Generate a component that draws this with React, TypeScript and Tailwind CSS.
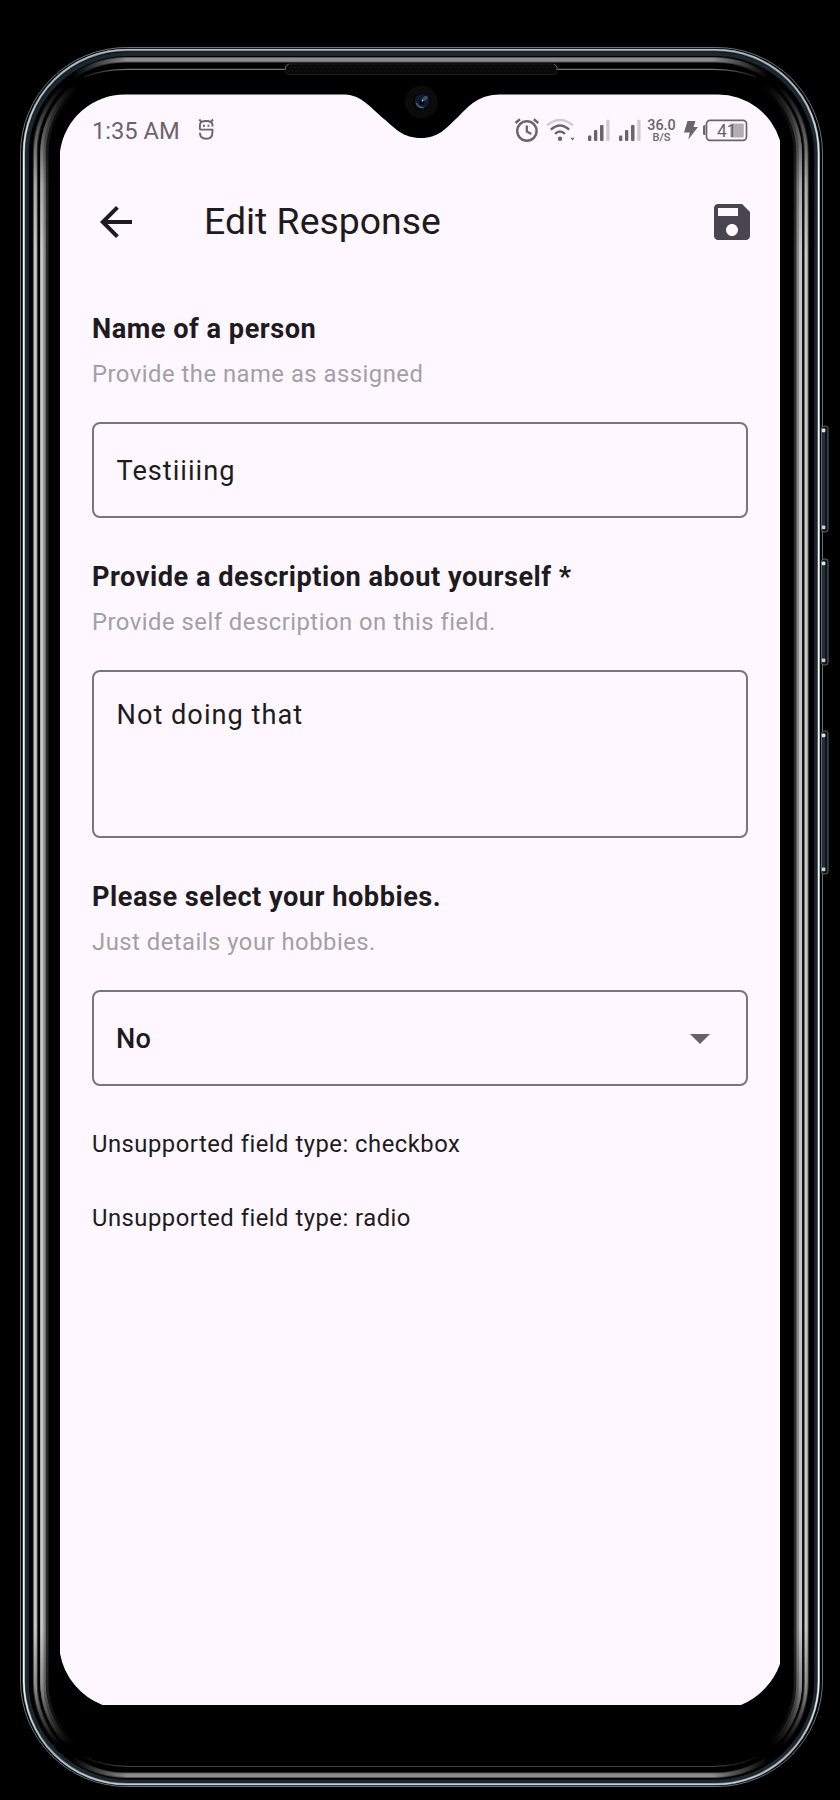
import React from "react";

function rail(l: number, t: number, r: number, b: number, q: number) {
  return `M${l + q} ${t}H${r - q}A${q} ${q} 0 0 1 ${r} ${t + q}V${b - q}A${q} ${q} 0 0 1 ${r - q} ${b}H${l + q}A${q} ${q} 0 0 1 ${l} ${b - q}V${t + q}A${q} ${q} 0 0 1 ${l + q} ${t}Z`;
}

const sideKeys = [
  { y: 426, h: 106 },
  { y: 559, h: 106 },
  { y: 731, h: 143 },
];

function PhoneFrame() {
  return (
    <svg className="absolute inset-0" width="840" height="1800" viewBox="0 0 840 1800" fill="none" aria-hidden="true">
      <defs>
        <linearGradient id="side" gradientUnits="userSpaceOnUse" x1="0" y1="85" x2="0" y2="1745">
          <stop offset="0" stopColor="#fff" stopOpacity="0" />
          <stop offset="0.025" stopColor="#fff" stopOpacity="0.4" />
          <stop offset="0.06" stopColor="#fff" stopOpacity="0.85" />
          <stop offset="0.1" stopColor="#fff" stopOpacity="1" />
          <stop offset="0.93" stopColor="#fff" stopOpacity="1" />
          <stop offset="0.965" stopColor="#fff" stopOpacity="0.7" />
          <stop offset="1" stopColor="#fff" stopOpacity="0" />
        </linearGradient>
        <linearGradient id="flat" gradientUnits="userSpaceOnUse" x1="72" y1="0" x2="768" y2="0">
          <stop offset="0" stopColor="#fff" stopOpacity="0" />
          <stop offset="0.08" stopColor="#fff" stopOpacity="1" />
          <stop offset="0.92" stopColor="#fff" stopOpacity="1" />
          <stop offset="1" stopColor="#fff" stopOpacity="0" />
        </linearGradient>
        <linearGradient id="edge" gradientUnits="userSpaceOnUse" x1="0" y1="48" x2="0" y2="1786">
          <stop offset="0" stopColor="#aebbc2" />
          <stop offset="0.03" stopColor="#b4c0c7" />
          <stop offset="0.07" stopColor="#f4fafb" />
          <stop offset="0.94" stopColor="#f4fafb" />
          <stop offset="0.98" stopColor="#a8b5bc" />
          <stop offset="1" stopColor="#c3d0d8" />
        </linearGradient>
        <mask id="sideMask" maskUnits="userSpaceOnUse" x="0" y="0" width="840" height="1800">
          <path d="M0 0L76 84V1750L0 1800ZM840 0L764 84V1750L840 1800Z" fill="url(#side)" />
        </mask>
        <mask id="flatMask" maskUnits="userSpaceOnUse" x="0" y="0" width="840" height="1800">
          <path d="M0 0L84 110H756L840 0ZM0 1800L66 1740H774L840 1800Z" fill="url(#flat)" />
        </mask>
      </defs>
      <path d={rail(20.5, 47.5, 822.5, 1786.5, 106)} stroke="#6b7175" />
      <path d={rail(26.8, 54, 816.2, 1781.5, 100)} stroke="#1b262d" strokeWidth="4" />
      <path d={rail(23.8, 50, 818.7, 1784.2, 103)} stroke="#5d6a72" strokeWidth="2.6" />
      <path d={rail(23.8, 49.8, 818.7, 1784.3, 103)} stroke="url(#edge)" strokeWidth="1.6" />
      <g mask="url(#sideMask)">
        <path d={rail(35.3, 60, 806.2, 1775, 92)} stroke="#5a5a5a" strokeWidth="4.8" />
        <path d={rail(35.3, 60, 806.2, 1775, 92)} stroke="#c8c8c8" strokeWidth="2.8" />
        <path d={rail(44.5, 69, 797.7, 1767, 84)} stroke="#2b2b2b" strokeWidth="8" />
        <path d={rail(43, 67.3, 799.2, 1768.7, 86)} stroke="#8a8a8a" strokeWidth="5.5" />
        <path d={rail(41.8, 66, 800.6, 1770, 87)} stroke="#c6c6c6" strokeWidth="3" />
      </g>
      <g mask="url(#flatMask)">
        <path d={rail(33.5, 59.8, 807, 1775.2, 92)} stroke="#5c5c5c" strokeWidth="5.4" />
        <path d={rail(33.5, 59.8, 807, 1775.2, 92)} stroke="#8c8c8c" strokeWidth="3.4" />
        <path d="M84 77Q102 69.300 127 69.300H713Q738 69.300 756 77" stroke="#777" strokeWidth="1.200" />
        <path d="M84 1757Q105 1766.500 130 1766.500H710Q738 1766.500 756 1757" stroke="#444" strokeWidth="1.200" />
      </g>
      <rect x="285" y="64" width="272" height="10.5" rx="4" fill="#080808" stroke="#1c1c1c" />
      <path d="M290 67.500H552M288 71H554" stroke="#1a1a1a" strokeDasharray="1.500 2.500" />
      <path d="M285.500 70v-3l3-3M557 70v-3l-3-3" stroke="#777" strokeWidth="0.800" />
      {sideKeys.map((k) => (
        <g key={k.y}>
          <rect x="821.5" y={k.y} width="6.5" height={k.h} rx="2.5" fill="#0d1419" stroke="#6c7276" strokeWidth="0.9" />
          <rect x="822" y={k.y + 5} width="3" height={k.h - 10} fill="#22303a" />
          <rect x="821.8" y={k.y + 2.5} width="3.6" height="3.8" rx="1.2" fill="#dfe5e8" />
          <rect x="821.8" y={k.y + k.h - 6.5} width="3.6" height="3.8" rx="1.2" fill="#c9cfd2" />
        </g>
      ))}
      <path
        d="M60 151.500A65.600 65.600 0 0 1 125 94.500H345C361 95 370 107 384 119C396 129 403 138 421 138C439 138 446 128 458 117C470 105 478 95 500 94.500H718A64.800 64.800 0 0 1 780 140.500V1664A70 70 0 0 1 741 1705H102.500A68 68 0 0 1 60 1653.500Z"
        fill="#fef7ff"
      />
      <circle cx="421.5" cy="102" r="16.5" fill="#0b0b0b" />
      <circle cx="421.5" cy="102" r="8.5" fill="#010307" />
      <circle cx="422" cy="101.5" r="7.3" fill="#0e1c2e" />
      <ellipse cx="425" cy="98.500" rx="3.200" ry="2" transform="rotate(-40 425 98.500)" fill="#34507a" />
      <circle cx="422" cy="102" r="2.600" fill="#03060d" />
      <circle cx="422.500" cy="100.500" r="1" fill="#b9c6d6" />
      <path d="M416.500 103q1.500 5 7 4.500" stroke="#3f6a73" strokeWidth="1.600" />
    </svg>
  );
}

function SignalIcon() {
  return (
    <svg width="22" height="24" viewBox="0 0 22 24" fill="#69656a" aria-hidden="true">
      <rect x="0" y="17.500" width="3.300" height="5.500" rx="1" />
      <rect x="6" y="12" width="3.300" height="11" rx="1" />
      <rect x="12" y="7" width="3.500" height="16" rx="1" />
      <rect x="18.300" y="1.800" width="3.300" height="21.200" rx="1" fill="#d0cad1" />
    </svg>
  );
}

function StatusBar() {
  return (
    <div className="flex h-6 items-start text-[#69656a]">
      <span className="w-[86px] text-[23.700px] leading-[26px] whitespace-nowrap">1:35 AM</span>
      <svg className="ml-[20px]" width="17" height="24" viewBox="0 0 17 24" fill="none" stroke="#69656a" strokeWidth="1.900" aria-hidden="true">
        <path d="M14.500 8.500V7Q14.500 3 8.200 3T1.900 7V10.800Q1.900 11.600 2.800 11.600H14.400V14.500Q14.400 20.800 8.200 20.800T1.900 14.800" />
        <path d="M1.300 1.500l2.600 2.800M15 1.500l-2.600 2.800" />
        <path d="M5 7.700h1.900M9.500 7.700h1.900" />
      </svg>
      <svg className="ml-[299px]" width="26" height="24" viewBox="0 0 26 24" fill="none" stroke="#69656a" aria-hidden="true">
        <circle cx="12.900" cy="13" r="9.700" strokeWidth="2.400" />
        <path d="M12.800 7.500v6l4.500 2.600" strokeWidth="2.300" strokeLinejoin="round" />
        <path d="M1.500 5l4.500-3.700M24.300 5l-4.500-3.700" strokeWidth="2.400" />
      </svg>
      <svg className="ml-[6px]" width="29" height="24" viewBox="0 0 29 24" fill="none" stroke="#69656a" strokeWidth="2.400" aria-hidden="true">
        <path d="M1 7.300Q14 -3.500 27 7.300" stroke="#d0cad1" />
        <path d="M4.800 11.700Q14 3.200 23.200 11.700M9 15.800Q14 11 19 15.800" />
        <circle cx="14" cy="20.800" r="2.200" fill="#69656a" stroke="none" />
        <path d="M24.500 19.800h4l-2 2.700z" fill="#69656a" stroke="none" />
      </svg>
      <div className="ml-[13px] flex gap-[9px]">
        <SignalIcon />
        <SignalIcon />
      </div>
      <div className="ml-[6px] flex w-[29px] flex-col items-center font-medium">
        <span className="text-[14.400px] leading-[15px]">36.0</span>
        <span className="text-[11px] leading-[9px]">B/S</span>
      </div>
      <svg className="ml-[7px]" width="16" height="24" viewBox="0 0 16 24" fill="#69656a" aria-hidden="true">
        <path d="M4.500 3H12.500L10.500 9H15L5.300 21.500L6.800 14.500H1z" />
      </svg>
      <svg className="ml-[3px]" width="46" height="24" viewBox="0 0 46 24" fill="none" aria-hidden="true">
        <path d="M3.300 7H2.500Q1 7 1 8.500v7Q1 17 2.500 17h.8z" fill="#69656a" />
        <rect x="4.500" y="2.300" width="40" height="20" rx="3.500" stroke="#69656a" strokeWidth="1.700" />
        <rect x="28.300" y="5.500" width="13.500" height="14" rx="1" fill="#b3adb4" />
        <text x="15" y="18.500" fontSize="17.500" fontFamily="Roboto" fontWeight="400" fill="#69656a">41</text>
      </svg>
    </div>
  );
}

function Label({ title, hint }: { title: string; hint: string }) {
  return (
    <>
      <h2 className="text-[27.200px] leading-[40px] font-bold tracking-[0.500px] whitespace-nowrap">{title}</h2>
      <p className="mt-2 text-[23.800px] leading-[35px] tracking-[0.500px] whitespace-nowrap text-[#a3a0a4]">{hint}</p>
    </>
  );
}

export default function App() {
  return (
    <div className="relative h-[1800px] w-[840px] overflow-hidden bg-black font-['Roboto',sans-serif] text-[#1d1b20]">
      <PhoneFrame />
      <main className="relative flex flex-col px-[92px] pt-[118px]">
        <StatusBar />
        <header className="mt-[56px] flex h-12 items-center">
          <svg width="48" height="48" viewBox="0 0 24 24" fill="#1d1b20" aria-label="Back">
            <path d="M20 11H7.830l5.590-5.590L12 4l-8 8 8 8 1.410-1.410L7.830 13H20v-2z" />
          </svg>
          <h1 className="ml-[64px] pb-[2px] text-[37.400px] leading-[46px] whitespace-nowrap">Edit Response</h1>
          <svg className="-mr-2 ml-auto" width="48" height="48" viewBox="0 0 24 24" fill="#49454f" aria-label="Save">
            <path d="M17 3H5c-1.110 0-2 .9-2 2v14c0 1.100.890 2 2 2h14c1.100 0 2-.9 2-2V7l-4-4zm-5 16c-1.660 0-3-1.340-3-3s1.340-3 3-3 3 1.340 3 3-1.340 3-3 3zm3-10H5V5h10v4z" />
          </svg>
        </header>
        <form className="mt-[63px] flex flex-col">
          <Label title="Name of a person" hint="Provide the name as assigned" />
          <div className="mt-[30px] flex h-24 items-center rounded-lg border-2 border-[#79747e] px-[22.500px] pt-[2px] text-[27.200px] tracking-[1px]">Testiiiing</div>
          <div className="h-[39px]" />
          <Label title="Provide a description about yourself *" hint="Provide self description on this field." />
          <div className="mt-[30px] flex h-[168px] rounded-lg border-2 border-[#79747e] px-[22.500px] pt-[23px] text-[27.200px] leading-[41px] tracking-[1px]">Not doing that</div>
          <div className="h-[39px]" />
          <Label title="Please select your hobbies." hint="Just details your hobbies." />
          <div className="mt-[30px] flex h-24 items-center justify-between rounded-lg border-2 border-[#79747e] pr-[22px] pl-[22px] text-[27.200px] font-medium tracking-[0.300px]">
            <span className="pt-[2px]">No</span>
            <svg width="48" height="48" viewBox="0 0 24 24" fill="#666267" aria-hidden="true"><path d="M7 10l5 5 5-5z" /></svg>
          </div>
          <p className="mt-[41px] text-[23.800px] leading-[34px] tracking-[0.500px]">Unsupported field type: checkbox</p>
          <p className="mt-10 text-[23.800px] leading-[34px] tracking-[0.500px]">Unsupported field type: radio</p>
        </form>
      </main>
    </div>
  );
}
